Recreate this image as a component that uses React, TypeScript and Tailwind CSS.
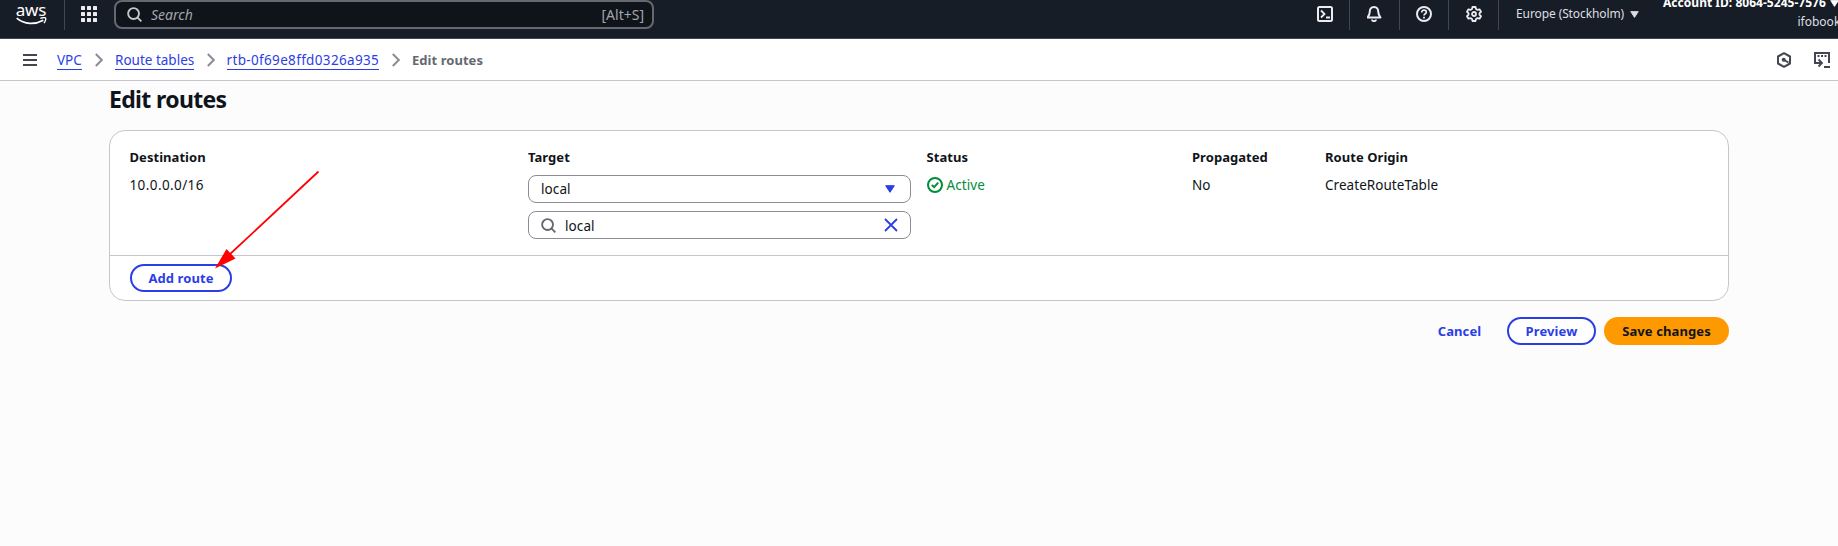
import type { ReactNode } from "react";

function SearchIcon({ className }: { className: string }) {
  return (
    <svg viewBox="0 0 16 16" fill="none" stroke="currentColor" strokeWidth="2" className={className}>
      <circle cx="7" cy="7" r="5.8" />
      <path d="m11 11 4.300 4.300" />
    </svg>
  );
}

function Caret({ className }: { className: string }) {
  return (
    <svg viewBox="0 0 10 8" fill="currentColor" stroke="currentColor" strokeLinejoin="round" className={className}>
      <path d="M.7.7h8.6L5 7.3Z" />
    </svg>
  );
}

function AwsLogo() {
  return (
    <div className="flex h-[38px] w-[64px] shrink-0 flex-col items-center text-white">
      <span className="ml-[-2px] h-[17px] font-['Noto_Sans',sans-serif] text-[17px] leading-[20px] font-normal tracking-[-0.2px]">
        aws
      </span>
      <svg viewBox="0 0 31 8" fill="none" stroke="currentColor" className="ml-[-1px] h-2 w-[31px]">
        <path d="M.7 1.200C8.500 7.800 19 7.800 27.300 3.200" strokeWidth="1.700" />
        <path d="M24.300 1.300c2.400-.8 5-.7 5.400-.1.400.7-.3 3.300-1.800 4.900" strokeWidth="1.300" />
      </svg>
    </div>
  );
}

function Chevron() {
  return (
    <svg viewBox="0 0 8 14" fill="none" stroke="#8c8c94" strokeWidth="2" className="h-3.5 w-2">
      <path d="m.8 1 6 6-6 6" />
    </svg>
  );
}

function ToolCell({ width, children }: { width: string; children: ReactNode }) {
  return (
    <div className={`flex h-[30px] items-start justify-center border-r border-[#424650] pt-[6px] ${width}`}>
      <svg viewBox="0 0 16 16" fill="none" stroke="#ebebf0" strokeWidth="2" className="h-4 w-4">
        {children}
      </svg>
    </div>
  );
}

function TopBar() {
  return (
    <header className="flex h-[39px] items-start overflow-hidden border-b border-[#424650] bg-[#161d26]">
      <AwsLogo />
      <div className="h-[30px] w-px shrink-0 bg-[#424650]" />
      <svg viewBox="0 0 16 16" fill="#ebebf0" className="mt-[6px] ml-4 h-4 w-4 shrink-0">
        {[0, 6, 12].map((y) => [0, 6, 12].map((x) => <rect key={`${x}-${y}`} x={x} y={y} width="4" height="4" rx=".6" />))}
      </svg>
      <div className="ml-[17px] flex h-[29px] w-[540px] shrink-0 items-center rounded-lg border-2 border-[#656871] bg-[#0f141a] pr-[8px] pl-[11px] text-[14px]">
        <SearchIcon className="h-[15px] w-[15px] text-[#c6c6cd]" />
        <span className="ml-[9px] text-[#a4a4ad] italic">Search</span>
        <span className="ml-auto text-[#a4a4ad]">[Alt+S]</span>
      </div>
      <div className="ml-auto flex shrink-0">
        <ToolCell width="w-[50px]">
          <rect x="1" y="1" width="14" height="14" rx="1.5" />
          <path d="m4 4.500 3.500 3.500L4 11.500M9 11.500h4" strokeWidth="1.800" />
        </ToolCell>
        <ToolCell width="w-[50px]">
          <g transform="translate(-1 0)">
            <path d="M8 1C5 1 3.800 3.200 3.800 5.500 3.800 8 3.200 9.300 1.500 11.500h13C12.800 9.300 12.200 8 12.200 5.500 12.200 3.200 11 1 8 1Z" strokeLinejoin="round" />
            <path d="M6 13.500c0 1 .8 1.700 2 1.700s2-.7 2-1.700" strokeWidth="1.800" />
          </g>
        </ToolCell>
        <ToolCell width="w-[49px]">
          <circle cx="8" cy="8" r="7" />
          <path d="M5.700 6.500C5.700 5 6.600 4.200 8 4.200s2.300.8 2.300 2c0 1.600-2.300 1.600-2.300 3.400" strokeWidth="1.700" />
          <path d="M8 10.800v1.700" strokeWidth="1.800" />
        </ToolCell>
        <ToolCell width="w-[50px]">
          <path d="M6.500 1h3l.5 2 1.500.9 2-.6 1.500 2.500L13.500 7.200v1.600l1.500 1.400-1.500 2.500-2-.6-1.500.9-.5 2h-3L6 13l-1.500-.9-2 .6L1 10.200l1.500-1.400V7.200L1 5.800l1.500-2.500 2 .6L6 3Z" strokeWidth="1.800" strokeLinejoin="round" />
          <circle cx="8" cy="8" r="2" strokeWidth="1.800" />
        </ToolCell>
      </div>
      <div className="flex h-7 w-[164px] shrink-0 items-center pl-[17px] text-[12px] text-[#dedee3]">
        <span className="tracking-[-0.1px] whitespace-nowrap">Europe (Stockholm)</span>
        <Caret className="ml-[6px] h-[7px] w-[9px]" />
      </div>
      <div className="-mt-[6px] flex w-[175px] shrink-0 flex-col text-[12px] whitespace-nowrap">
        <div className="flex h-[18px] items-center font-bold text-white">
          <span className="tracking-[0.03px]">Account ID: 8064-5245-7576</span>
          <Caret className="ml-1 h-[7px] w-[9px] shrink-0" />
        </div>
        <span className="mt-[1px] pl-[134.5px] leading-[18px] text-[#dedee3]">ifobook</span>
      </div>
    </header>
  );
}

const link = "h-[20px] border-b border-[#2b3ee6] leading-[20px] text-[#2b3ee6]";

function Breadcrumbs() {
  return (
    <nav className="flex h-[42px] items-center border-b border-[#c6c6cd] bg-white text-[13.5px] whitespace-nowrap">
      <svg viewBox="0 0 14 12" stroke="#424650" strokeWidth="2" className="ml-[23px] h-3 w-3.5">
        <path d="M0 1h14M0 6h14M0 11h14" />
      </svg>
      <div className="ml-5 flex items-center">
        <div className="flex w-[58px] items-center gap-[13px]">
          <a className={link}>VPC</a>
          <Chevron />
        </div>
        <div className="flex w-[111.500px] items-center gap-[13px]">
          <a className={link}>Route tables</a>
          <Chevron />
        </div>
        <div className="flex w-[185.500px] items-center gap-[13px]">
          <a className={`${link} tracking-[0.34px]`}>rtb-0f69e8ffd0326a935</a>
          <Chevron />
        </div>
        <span className="pt-0.5 text-[13px] font-bold tracking-[0.05px] text-[#656871]">Edit routes</span>
      </div>
      <div className="mr-2 ml-auto flex gap-[22px]">
        <svg viewBox="0 0 16 16" fill="none" stroke="#424650" strokeWidth="2" className="h-4 w-4">
          <path d="M8 1.200 14 4.500v7L8 14.800 2 11.500v-7Z" strokeLinejoin="round" />
          <circle cx="7.700" cy="7.700" r="2" fill="#424650" stroke="none" />
          <path d="m8 8 4.500 2.500" />
        </svg>
        <svg viewBox="0 0 16 16" fill="none" stroke="#424650" strokeWidth="2" className="h-4 w-4">
          <path d="M15 11V1H1v10h6.500" />
          <path d="M3.500 4h2M7 4h2M10.500 4h2" />
          <path d="m4.500 7.500 3.500 3.500-3.500 3.500" strokeWidth="1.800" />
          <path d="M10 15h6" />
        </svg>
      </div>
    </nav>
  );
}

function Column({ title, width, children }: { title: string; width: string; children: ReactNode }) {
  return (
    <div className={`shrink-0 ${width}`}>
      <div className="text-[13px] leading-5 font-bold tracking-[0.05px]">{title}</div>
      <div className="mt-2 leading-5">{children}</div>
    </div>
  );
}

const button = "flex h-7 items-center justify-center rounded-full pt-0.5 text-[13px] font-bold tracking-[0.1px] whitespace-nowrap";

export default function App() {
  return (
    <div className="relative h-[546px] w-[1838px] overflow-hidden bg-[#fcfcfd] font-['Noto_Sans',sans-serif] text-[#0f141a]">
      <TopBar />
      <Breadcrumbs />
      <main className="ml-[109px] w-[1620px] text-[13.5px]">
        <h1 className="h-[49px] pt-[2px] text-[23px] leading-8 font-bold tracking-[-0.65px]">Edit routes</h1>
        <section className="h-[171px] rounded-2xl border border-[#c6c6cd] bg-white">
          <div className="flex h-[125px] border-b border-[#c6c6cd] pt-4 pl-[19.5px]">
            <Column title="Destination" width="w-[398.5px]">
              <span className="tracking-[0.4px]">10.0.0.0/16</span>
            </Column>
            <Column title="Target" width="w-[398.5px]">
              <div className="flex w-[383px] flex-col gap-2">
                <div className="flex h-7 items-center justify-between rounded-lg border border-[#8c8c94] pr-[15px] pl-3">
                  <span className="tracking-[0.1px]">local</span>
                  <Caret className="h-2 w-2.5 text-[#2b3ee6]" />
                </div>
                <div className="flex h-7 items-center rounded-lg border border-[#8c8c94] pr-3 pl-3">
                  <SearchIcon className="h-[15px] w-[15px] text-[#656871]" />
                  <span className="mt-[2px] ml-[9px] tracking-[0.1px]">local</span>
                  <svg viewBox="0 0 14 14" stroke="#2b3ee6" strokeWidth="1.8" className="ml-auto h-3.5 w-3.5">
                    <path d="m1 1 12 12M13 1 1 13" />
                  </svg>
                </div>
              </div>
            </Column>
            <Column title="Status" width="w-[265.5px]">
              <div className="flex items-center text-[#008e39]">
                <svg viewBox="0 0 16 16" fill="none" stroke="currentColor" strokeWidth="2" className="h-4 w-4">
                  <circle cx="8" cy="8" r="7" />
                  <path d="m4.800 8 2.400 2.200 4-4.500" />
                </svg>
                <span className="ml-1 tracking-[0.1px]">Active</span>
              </div>
            </Column>
            <Column title="Propagated" width="w-[133px]">No</Column>
            <Column title="Route Origin" width="w-[200px]">
              <span className="tracking-[0.05px]">CreateRouteTable</span>
            </Column>
          </div>
          <div className="pt-2 pl-5">
            <button className={`${button} w-[102px] border-2 border-[#2b3ee6] text-[#2b3ee6]`}>Add route</button>
          </div>
        </section>
        <div className="mt-4 flex justify-end">
          <button className={`${button} w-[81px] text-[#2b3ee6]`}>Cancel</button>
          <button className={`${button} ml-[7px] w-[89px] border-2 border-[#2b3ee6] bg-white text-[#2b3ee6]`}>Preview</button>
          <button className={`${button} ml-2 w-[125px] bg-[#ff9900]`}>Save changes</button>
        </div>
      </main>
      <svg viewBox="0 0 110 102" className="pointer-events-none absolute top-[169px] left-[213px] h-[102px] w-[110px]">
        <path d="M105.500 2.500 15 87" stroke="#f00" strokeWidth="1.800" />
        <path d="M2 99.500 13.500 80l9 9.500Z" fill="#f00" />
      </svg>
    </div>
  );
}
